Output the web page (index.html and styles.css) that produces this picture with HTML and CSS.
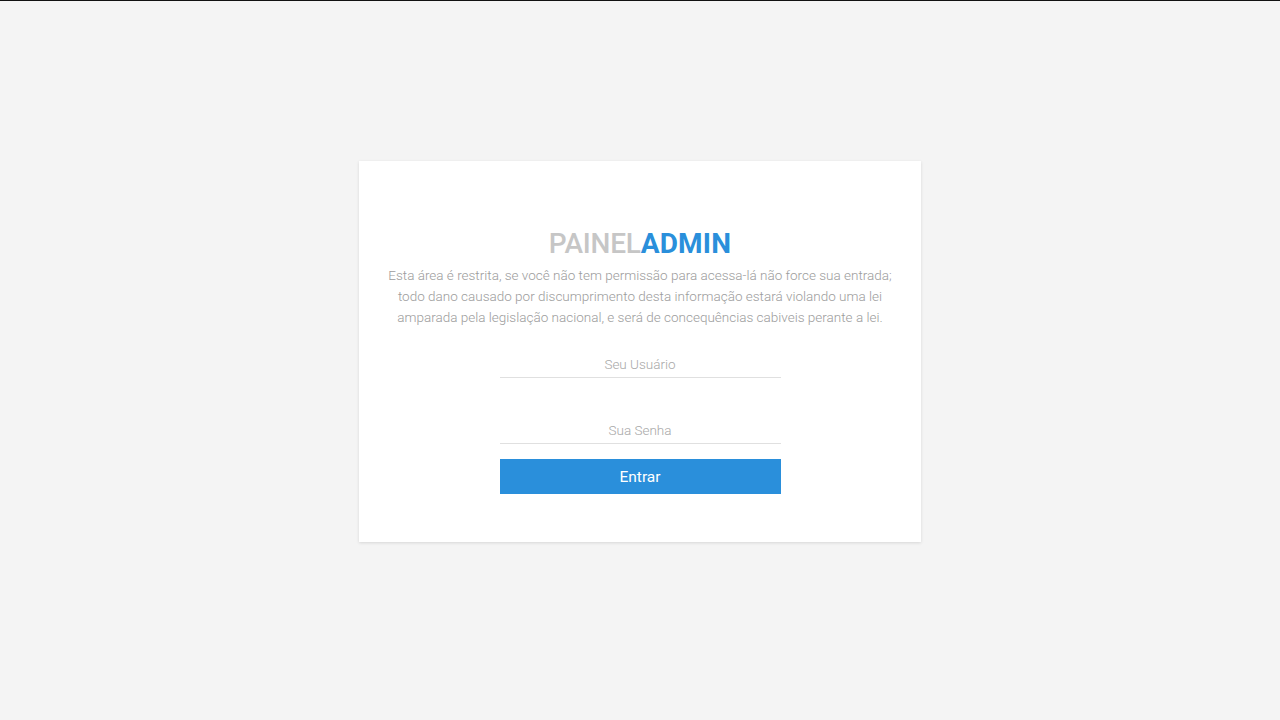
FILE: index.html
```html
<!DOCTYPE html>
<html lang="pt-BR">
<head>
<meta charset="utf-8">
<title>Painel Admin</title>
<link rel="stylesheet" href="styles.css">
</head>
<body>
<div class="page">
  <div class="card">
    <h1 class="title"><span class="light">PAINEL</span><span class="strong">ADMIN</span></h1>
    <p class="notice">Esta área é restrita, se você não tem permissão para acessa-lá não force sua entrada; todo dano causado por discumprimento desta informação estará violando uma lei amparada pela legislação nacional, e será de concequências cabiveis perante a lei.</p>
    <form class="form">
      <input class="field" type="text" placeholder="Seu Usuário">
      <input class="field field-pass" type="password" placeholder="Sua Senha">
      <button class="btn" type="button">Entrar</button>
    </form>
  </div>
</div>
</body>
</html>
```

FILE: styles.css
```css
* { box-sizing: border-box; }
html, body { margin: 0; padding: 0; }
body {
  background: #f4f4f4;
  border-top: 1px solid #111;
  font-family: Roboto, "Liberation Sans", sans-serif;
  height: 720px;
  overflow: hidden;
}
.page {
  display: flex;
  justify-content: center;
  padding-top: 160px;
}
.card {
  width: 562px;
  height: 381px;
  background: #fff;
  box-shadow: 0 1px 3px rgba(0,0,0,0.12);
  padding: 65px 26px 0;
  display: flex;
  flex-direction: column;
  align-items: center;
}
.title {
  margin: 0;
  font-size: 28px;
  line-height: 36px;
  font-weight: 700;
}
.title .light { color: #c6c6c6; font-weight: 500; letter-spacing: -0.2px; }
.title .strong { color: #2a8fdb; letter-spacing: 0.2px; }
.notice {
  margin: 3px 0 0;
  font-size: 13.5px;
  line-height: 21px;
  font-weight: 300;
  color: #9c9c9c;
  text-align: center;
}
.form {
  width: 281px;
  margin-top: 23px;
  display: flex;
  flex-direction: column;
}
.field {
  border: 0;
  border-bottom: 1px solid #e0e0e0;
  height: 27px;
  padding: 0;
  text-align: center;
  font-family: Roboto, "Liberation Sans", sans-serif;
  font-size: 13.5px;
  font-weight: 300;
  color: #777;
  outline: none;
  background: transparent;
}
.field::placeholder { color: #a8a8a8; }
.field-pass { margin-top: 39px; }
.btn {
  margin-top: 15px;
  height: 35px;
  border: 0;
  background: #2a8fdb;
  color: #fff;
  font-family: Roboto, "Liberation Sans", sans-serif;
  font-size: 15.5px;
  font-weight: 400;
  cursor: pointer;
}
```
